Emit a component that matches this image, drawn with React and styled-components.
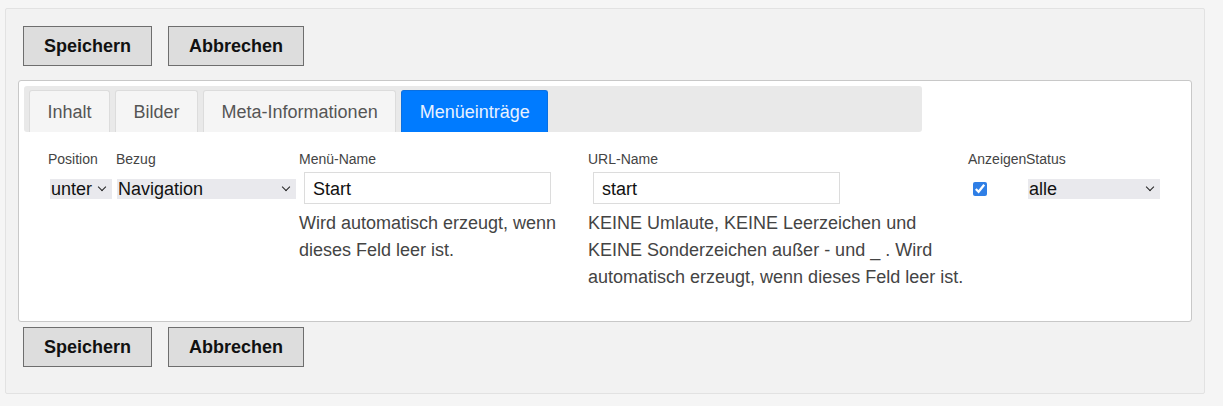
import React from "react";
import styled, { createGlobalStyle } from "styled-components";

const GlobalStyle = createGlobalStyle`
  html, body {
    margin: 0;
    padding: 0;
    background: #f5f5f5;
    font-family: "Liberation Sans", Arial, sans-serif;
  }
`;

const Page = styled.div`
  box-sizing: border-box;
  width: 1200px;
  height: 386px;
  margin: 8px 0 0 5px;
  padding: 17px 12px 0;
  background: #f2f2f2;
  border: 1px solid #e2e2e2;
  border-radius: 2px;
`;

const ButtonRow = styled.div`
  display: flex;
  gap: 16px;
  padding-left: 5px;
  margin-bottom: ${(p) => p.$gap || 0}px;
`;

const Button = styled.button`
  box-sizing: border-box;
  height: 40px;
  padding: 0 20px;
  background: #dddddd;
  border: 1px solid #6e6e6e;
  border-radius: 0;
  font-family: "Liberation Sans", Arial, sans-serif;
  font-size: 18px;
  font-weight: bold;
  color: #111;
  cursor: pointer;
`;

const Panel = styled.div`
  box-sizing: border-box;
  height: 242px;
  margin-bottom: 5px;
  padding: 5px;
  background: #fff;
  border: 1px solid #c8c8c8;
  border-radius: 3px;
`;

const TabBar = styled.div`
  box-sizing: border-box;
  display: flex;
  align-items: flex-end;
  gap: 5px;
  width: 898px;
  height: 46px;
  padding: 4px 5px 0;
  background: #e9e9e9;
  border-radius: 3px;
`;

const Tab = styled.div`
  box-sizing: border-box;
  height: 42px;
  padding: 1px 17.5px 0;
  display: flex;
  align-items: center;
  font-size: 18px;
  color: ${(p) => (p.$active ? "#e8f1ff" : "#555")};
  background: ${(p) => (p.$active ? "#007bff" : "#f5f5f5")};
  border: 1px solid ${(p) => (p.$active ? "#0a6fe0" : "#dcdcdc")};
  border-bottom: none;
  border-radius: 3px 3px 0 0;
`;

const Fields = styled.div`
  display: flex;
  padding: 18px 0 0 24px;
`;

const Column = styled.div`
  width: ${(p) => p.$w}px;
  flex: none;
  display: flex;
  flex-direction: column;
`;

const Label = styled.label`
  height: 18px;
  line-height: 18px;
  margin-bottom: 4px;
  font-size: 14px;
  color: #444;
  white-space: nowrap;
`;

const Control = styled.div`
  height: 32px;
  display: flex;
  align-items: center;
  padding-left: ${(p) => p.$off || 0}px;
`;

const SelectWrap = styled.div`
  position: relative;
  display: flex;
  margin-top: 1px;

  &::after {
    content: "";
    position: absolute;
    right: 7px;
    top: 5px;
    width: 5px;
    height: 5px;
    border-right: 1.8px solid #222;
    border-bottom: 1.8px solid #222;
    transform: rotate(45deg);
    pointer-events: none;
  }
`;

const Select = styled.select`
  appearance: none;
  width: ${(p) => p.$w}px;
  height: 20px;
  padding: 0 0 0 1px;
  border: none;
  border-radius: 0;
  background: #e9e9ed;
  font-family: "Liberation Sans", Arial, sans-serif;
  font-size: 18px;
  line-height: 20px;
  color: #111;
  outline: none;
`;

const TextInput = styled.input`
  box-sizing: border-box;
  width: 247px;
  height: 32px;
  padding: 2px 8px 0;
  border: 1px solid #dcdcdc;
  border-radius: 0;
  font-family: "Liberation Sans", Arial, sans-serif;
  font-size: 18px;
  color: #111;
  outline: none;
`;

const Check = styled.input`
  width: 14px;
  height: 14px;
  margin: 1px 0 0;
  accent-color: #2f7fe6;
`;

const Help = styled.div`
  margin-top: 6px;
  font-size: 18px;
  line-height: 27px;
  color: #444;
`;

const Dropdown = ({ w, value, options }) => (
  <SelectWrap>
    <Select $w={w} defaultValue={value}>
      {options.map((o) => (
        <option key={o} value={o}>
          {o}
        </option>
      ))}
    </Select>
  </SelectWrap>
);

const Actions = ({ gap }) => (
  <ButtonRow $gap={gap}>
    <Button>Speichern</Button>
    <Button>Abbrechen</Button>
  </ButtonRow>
);

export default function App() {
  return (
    <>
      <GlobalStyle />
      <Page>
        <Actions gap={14} />
        <Panel>
          <TabBar>
            <Tab>Inhalt</Tab>
            <Tab>Bilder</Tab>
            <Tab>Meta-Informationen</Tab>
            <Tab $active>Menüeinträge</Tab>
          </TabBar>
          <Fields>
            <Column $w={68}>
              <Label>Position</Label>
              <Control $off={2}>
                <Dropdown w={62} value="unter" options={["unter", "nach"]} />
              </Control>
            </Column>
            <Column $w={183}>
              <Label>Bezug</Label>
              <Control $off={1}>
                <Dropdown w={179} value="Navigation" options={["Navigation"]} />
              </Control>
            </Column>
            <Column $w={289}>
              <Label>Menü-Name</Label>
              <Control $off={5}>
                <TextInput defaultValue="Start" />
              </Control>
              <Help>Wird automatisch erzeugt, wenn dieses Feld leer ist.</Help>
            </Column>
            <Column $w={380}>
              <Label>URL-Name</Label>
              <Control $off={5}>
                <TextInput defaultValue="start" />
              </Control>
              <Help>
                KEINE Umlaute, KEINE Leerzeichen und KEINE Sonderzeichen außer -
                und _ . Wird automatisch erzeugt, wenn dieses Feld leer ist.
              </Help>
            </Column>
            <Column $w={58}>
              <Label>Anzeigen</Label>
              <Control $off={5}>
                <Check type="checkbox" defaultChecked />
              </Control>
            </Column>
            <Column $w={140}>
              <Label>Status</Label>
              <Control $off={2}>
                <Dropdown w={132} value="alle" options={["alle"]} />
              </Control>
            </Column>
          </Fields>
        </Panel>
        <Actions />
      </Page>
    </>
  );
}
